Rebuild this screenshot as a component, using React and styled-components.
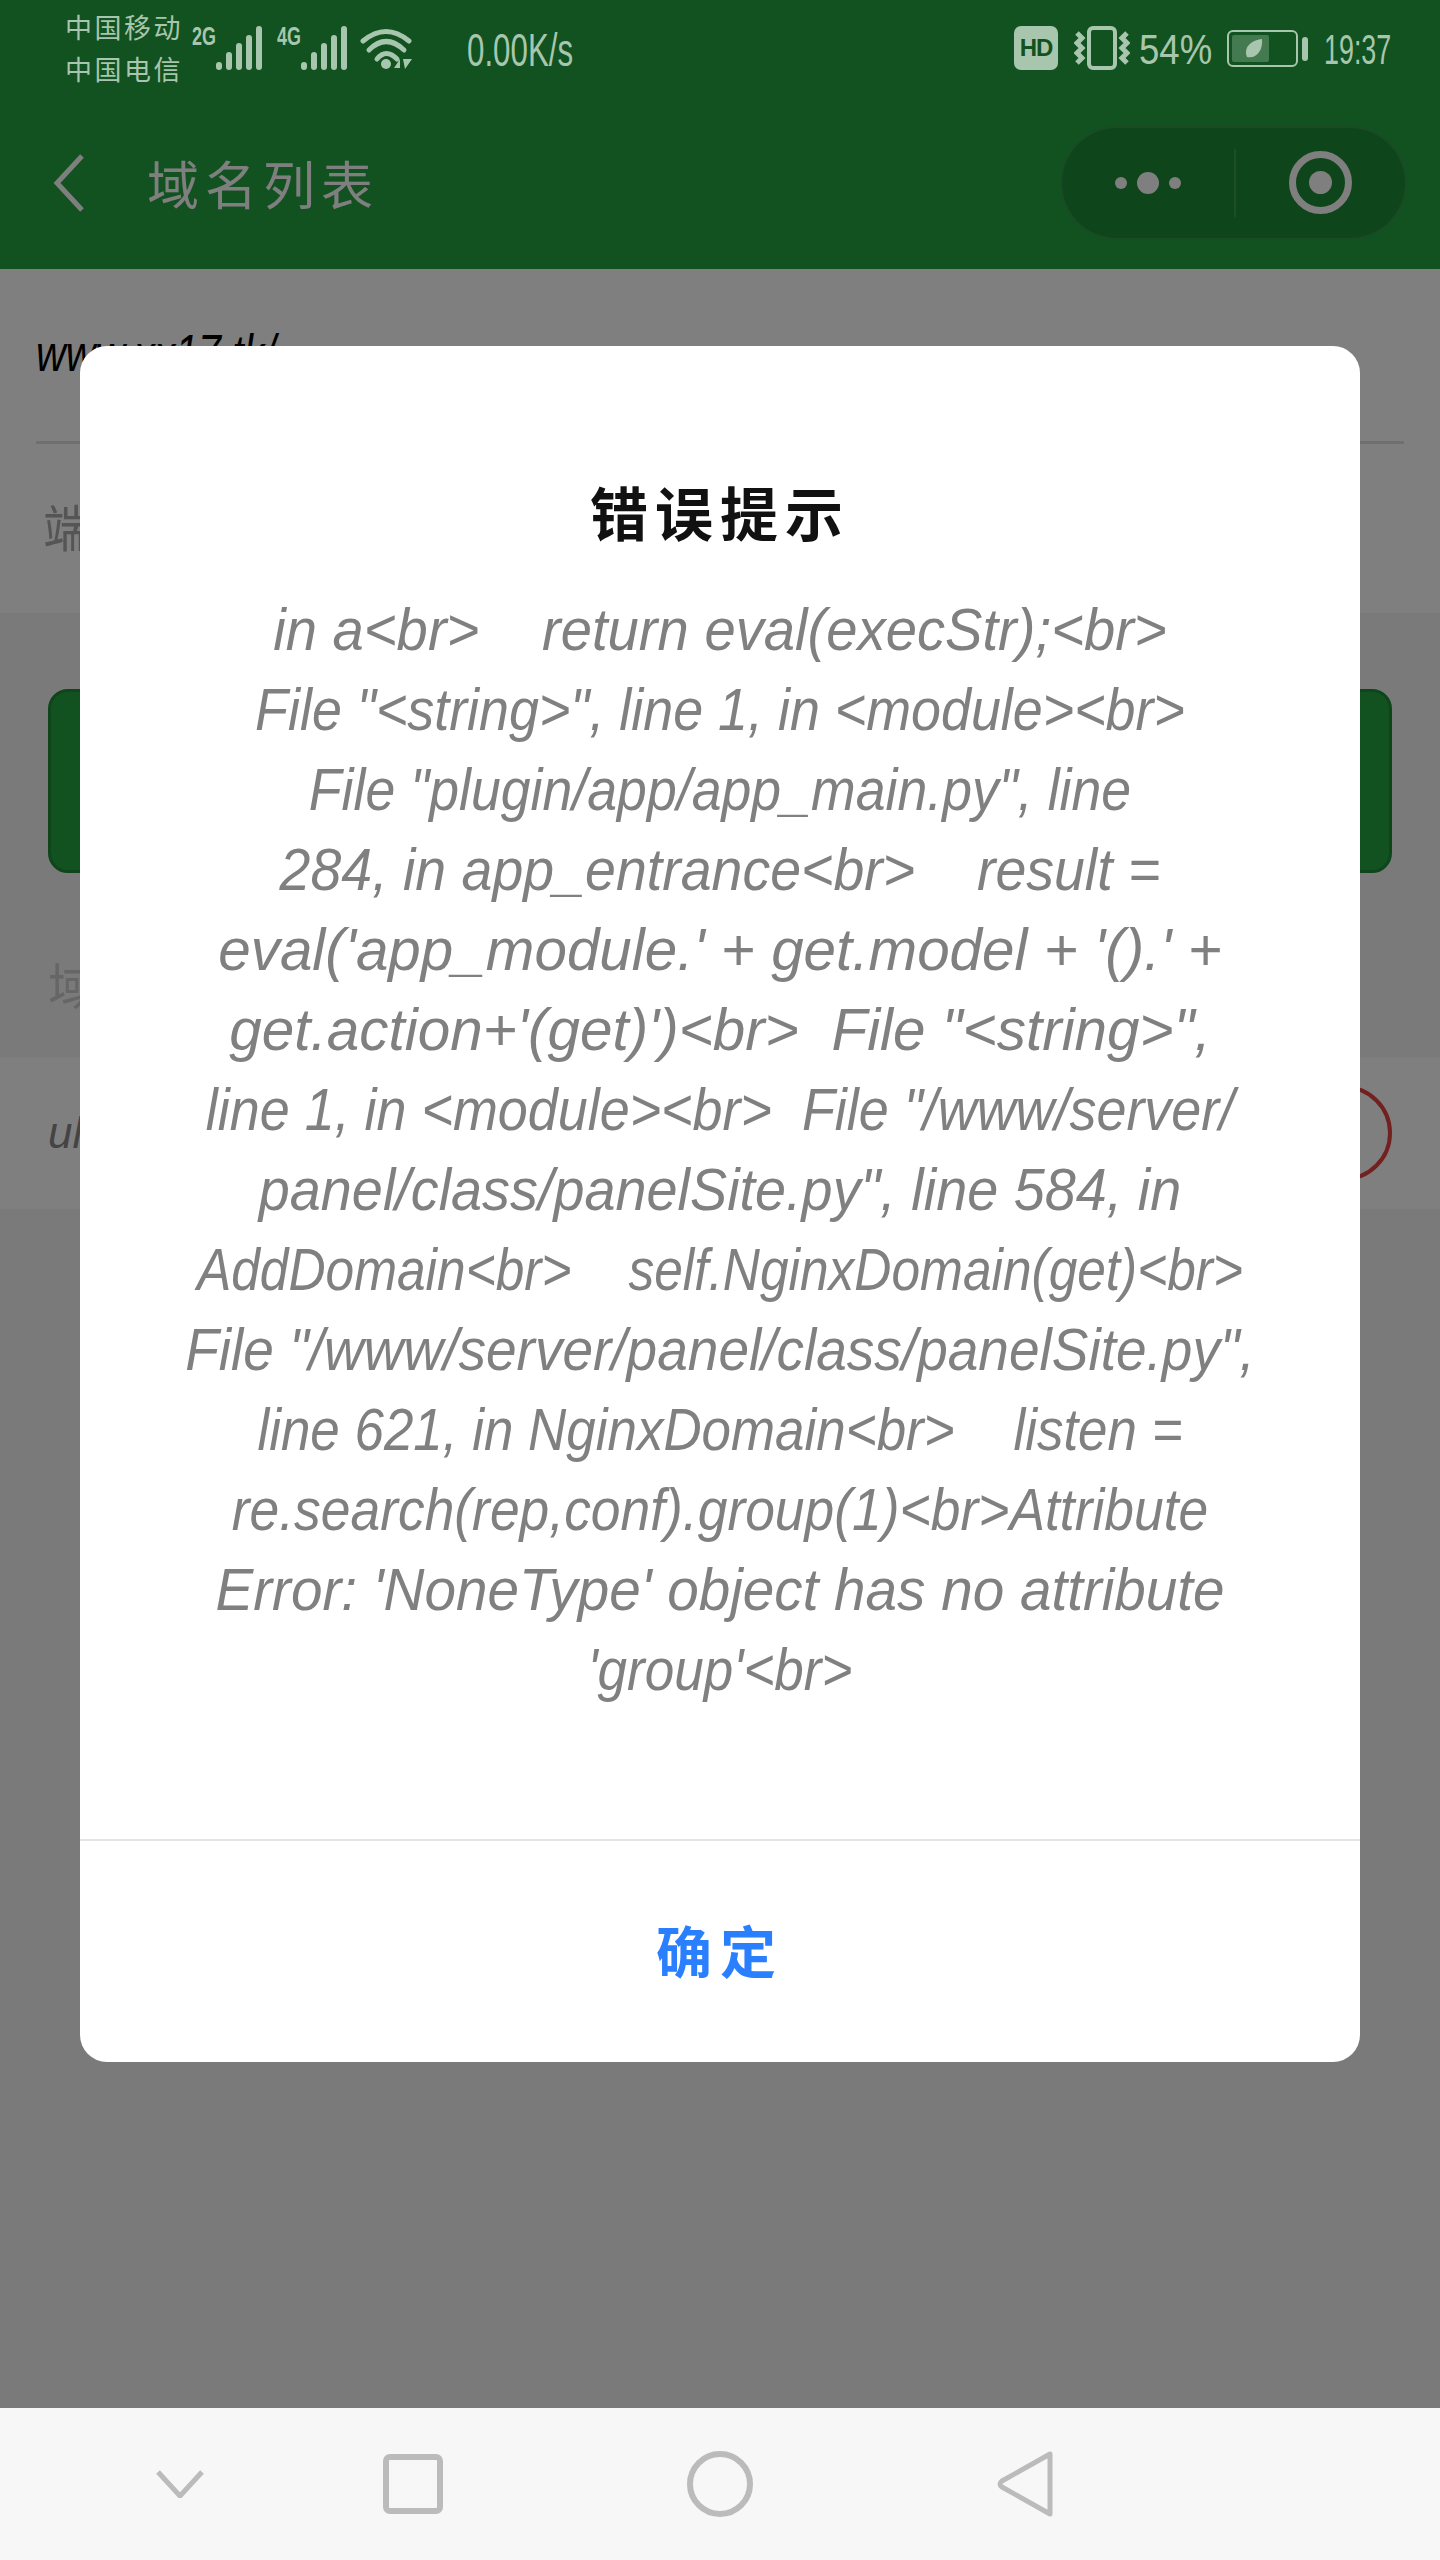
import React from 'react'
import styled, { createGlobalStyle } from 'styled-components'

const cjk = '"Noto Sans CJK SC", "Liberation Sans", sans-serif'
const sans = '"Liberation Sans", "Noto Sans CJK SC", sans-serif'

const messageLines = [
    { text: 'in a<br>\u00a0\u00a0\u00a0\u00a0return eval(execStr);<br>', fit: 0.937 },
    { text: 'File "<string>", line 1, in <module><br>', fit: 0.897 },
    { text: 'File "plugin/app/app_main.py", line', fit: 0.894 },
    { text: '284, in app_entrance<br>\u00a0\u00a0\u00a0\u00a0result =', fit: 0.925 },
    { text: "eval('app_module.' + get.model + '().' +", fit: 0.973 },
    { text: "get.action+'(get)')<br>\u00a0\u00a0File \"<string>\",", fit: 0.974 },
    { text: 'line 1, in <module><br>\u00a0\u00a0File "/www/server/', fit: 0.898 },
    { text: 'panel/class/panelSite.py", line 584, in', fit: 0.93 },
    { text: 'AddDomain<br>\u00a0\u00a0\u00a0\u00a0self.NginxDomain(get)<br>', fit: 0.857 },
    { text: 'File "/www/server/panel/class/panelSite.py",', fit: 0.917 },
    { text: 'line 621, in NginxDomain<br>\u00a0\u00a0\u00a0\u00a0listen =', fit: 0.882 },
    { text: 're.search(rep,conf).group(1)<br>Attribute', fit: 0.89 },
    { text: "Error: 'NoneType' object has no attribute", fit: 0.944 },
    { text: "'group'<br>", fit: 0.884 },
]

function Signal() {
    return (
        <SignalIcon viewBox="0 0 46 44">
            <rect x="0" y="36" width="6" height="8" rx="3" />
            <rect x="10" y="26" width="6" height="18" rx="3" />
            <rect x="20" y="17" width="6" height="27" rx="3" />
            <rect x="30" y="9" width="6" height="35" rx="3" />
            <rect x="40" y="0" width="6" height="44" rx="3" />
        </SignalIcon>
    )
}

function Wifi() {
    return (
        <WifiIcon viewBox="0 0 54 44">
            <g fill="none" stroke="#a8c6ad" strokeWidth="5" strokeLinecap="round">
                <path d="M4 15 Q27 -4 50 15" />
                <path d="M10 24 Q27 7 45 24" />
                <path d="M18 33 Q27 22 38 33" />
            </g>
            <circle cx="27" cy="38" r="5" fill="#a8c6ad" />
            <path d="M41 33 L35 42 H41 Z M44 33 H53 L46 43 Z" fill="#a8c6ad" />
        </WifiIcon>
    )
}

function Vibrate() {
    return (
        <VibrateIcon viewBox="0 0 56 44">
            <rect x="15" y="2" width="26" height="40" rx="4" fill="none" stroke="#a8c6ad" strokeWidth="4" />
            <path d="M3 7 L8 12 L3 17 L8 22 L3 27 L8 32 L3 37" fill="none" stroke="#a8c6ad" strokeWidth="5" />
            <path d="M53 7 L48 12 L53 17 L48 22 L53 27 L48 32 L53 37" fill="none" stroke="#a8c6ad" strokeWidth="5" />
        </VibrateIcon>
    )
}

function Battery() {
    return (
        <BatteryIcon viewBox="0 0 81 37">
            <rect x="1" y="1" width="69" height="35" rx="5" fill="none" stroke="#a8c6ad" strokeWidth="2" />
            <rect x="5" y="5" width="37" height="27" rx="2" fill="#437a4f" />
            <rect x="75" y="7" width="6" height="24" rx="3" fill="#a8c6ad" />
            <path d="M20 27 C16 18 24 10 35 9 C36 20 30 29 20 27 Z" fill="#a8c6ad" />
        </BatteryIcon>
    )
}

function App() {
    return (
        <Page>
            <GlobalStyle />
            <Header>
                <StatusBar>
                    <StatusGroup>
                        <Carriers>
                            <span>中国移动</span>
                            <span>中国电信</span>
                        </Carriers>
                        <NetLabel>2G</NetLabel>
                        <Signal />
                        <NetLabel $gap={15}>4G</NetLabel>
                        <Signal />
                        <Wifi />
                        <StatusText $gap={54} $width={106} $size={46} $fit={0.68}>0.00K/s</StatusText>
                    </StatusGroup>
                    <StatusGroup>
                        <HdBadge>HD</HdBadge>
                        <Vibrate />
                        <StatusText $gap={9} $width={72} $size={42} $fit={0.87}>54%</StatusText>
                        <Battery />
                        <StatusText $gap={16} $width={67} $size={42} $fit={0.64}>19:37</StatusText>
                    </StatusGroup>
                </StatusBar>
                <TitleBar>
                    <BackIcon viewBox="0 0 32 60">
                        <path d="M29 3 L4 30 L29 57" fill="none" stroke="#fff" strokeWidth="5" />
                    </BackIcon>
                    <PageTitle>域名列表</PageTitle>
                    <Capsule>
                        <MoreButton>
                            <Dot $size={12} />
                            <Dot $size={22} />
                            <Dot $size={12} />
                        </MoreButton>
                        <CloseButton>
                            <CloseRing />
                        </CloseButton>
                    </Capsule>
                </TitleBar>
            </Header>
            <Content>
                <Form>
                    <DomainInput><span>www.xx17.tk/</span></DomainInput>
                    <PortRow>端口</PortRow>
                </Form>
                <AddButton />
                <SectionLabel>域名</SectionLabel>
                <DomainRow>
                    <DomainName>ull</DomainName>
                    <DeleteButton />
                </DomainRow>
            </Content>
            <NavBar>
                <NavIcon viewBox="0 0 48 28" $width={48} $height={28} $gap={0}>
                    <path d="M2 2 L24 26 L46 2" fill="none" stroke="#bbb" strokeWidth="5" />
                </NavIcon>
                <NavIcon viewBox="0 0 60 60" $width={60} $height={60} $gap={179}>
                    <rect x="3" y="3" width="54" height="54" rx="4" fill="none" stroke="#bbb" strokeWidth="6" />
                </NavIcon>
                <NavIcon viewBox="0 0 66 66" $width={66} $height={66} $gap={244}>
                    <circle cx="33" cy="33" r="30" fill="none" stroke="#bbb" strokeWidth="6" />
                </NavIcon>
                <NavIcon viewBox="0 0 56 66" $width={56} $height={66} $gap={244}>
                    <path d="M53 3 V63 L5 36 Q1 33 5 30 Z" fill="none" stroke="#bbb" strokeWidth="5" strokeLinejoin="round" />
                </NavIcon>
            </NavBar>
            <Mask>
                <Modal>
                    <ModalTitle>错误提示</ModalTitle>
                    <ModalBody>
                        {messageLines.map((line) => (
                            <MessageLine key={line.text} $fit={line.fit}>{line.text}</MessageLine>
                        ))}
                    </ModalBody>
                    <ModalFooter>确定</ModalFooter>
                </Modal>
            </Mask>
        </Page>
    )
}

export default App

const GlobalStyle = createGlobalStyle`
    body{
        margin:0;
        font-family:"Noto Sans CJK SC", "Liberation Sans", sans-serif;
    }
`

const Page = styled.div`
    width:1440px;
    height:2560px;
    display:flex;
    flex-direction:column;
    position:relative;
    background:#f5f5f5;
    overflow:hidden;
`

const Header = styled.div`
    height:269px;
    background:#22a440;
    display:flex;
    flex-direction:column;
`

const StatusBar = styled.div`
    height:96px;
    padding:0 49px 0 65px;
    display:flex;
    align-items:center;
    justify-content:space-between;
    color:#a8c6ad;
    position:relative;
    z-index:2;
`

const StatusGroup = styled.div`
    display:flex;
    align-items:center;
`

const Carriers = styled.div`
    display:flex;
    flex-direction:column;
    font-family:${cjk};
    font-size:27px;
    line-height:42px;
    letter-spacing:2.5px;
    width:127px;
`

const NetLabel = styled.span`
    font-family:${sans};
    font-weight:700;
    font-size:26px;
    line-height:27px;
    width:24px;
    margin-left:${(p) => p.$gap || 0}px;
    align-self:flex-start;
    margin-top:17px;
    white-space:nowrap;
    transform:scaleX(0.69);
    transform-origin:left center;
`

const SignalIcon = styled.svg`
    width:46px;
    height:44px;
    fill:#a8c6ad;
`

const WifiIcon = styled.svg`
    width:54px;
    height:44px;
    margin-left:12px;
`

const StatusText = styled.span`
    font-family:${sans};
    font-size:${(p) => p.$size}px;
    width:${(p) => p.$width}px;
    margin-left:${(p) => p.$gap}px;
    margin-top:4px;
    white-space:nowrap;
    transform:scaleX(${(p) => p.$fit});
    transform-origin:left center;
`

const HdBadge = styled.span`
    width:44px;
    height:44px;
    border-radius:7px;
    background:#a8c6ad;
    color:#115220;
    font-family:${sans};
    font-weight:700;
    font-size:24px;
    letter-spacing:-1px;
    display:flex;
    align-items:center;
    justify-content:center;
`

const VibrateIcon = styled.svg`
    width:56px;
    height:44px;
    margin-left:16px;
`

const BatteryIcon = styled.svg`
    width:81px;
    height:37px;
    margin-left:16px;
`

const TitleBar = styled.div`
    flex:1;
    display:flex;
    align-items:center;
    padding:0 33px 0 53px;
`

const BackIcon = styled.svg`
    width:32px;
    height:60px;
`

const PageTitle = styled.div`
    flex:1;
    margin-left:62px;
    color:#fff;
    font-family:${cjk};
    font-size:52px;
    letter-spacing:6px;
`

const Capsule = styled.div`
    width:347px;
    height:114px;
    box-sizing:border-box;
    border-radius:57px;
    background:rgba(0,0,0,0.15);
    border:2px solid rgba(255,255,255,0.1);
    display:flex;
    align-items:center;
`

const MoreButton = styled.div`
    width:174px;
    height:68px;
    box-sizing:border-box;
    border-right:2px solid rgba(255,255,255,0.15);
    display:flex;
    align-items:center;
    justify-content:center;
    gap:10px;
`

const Dot = styled.span`
    width:${(p) => p.$size}px;
    height:${(p) => p.$size}px;
    border-radius:50%;
    background:#fff;
`

const CloseButton = styled.div`
    flex:1;
    display:flex;
    align-items:center;
    justify-content:center;
`

const CloseRing = styled.span`
    width:63px;
    height:63px;
    box-sizing:border-box;
    border-radius:50%;
    border:7px solid #fff;
    display:flex;
    align-items:center;
    justify-content:center;

    &::after{
        content:'';
        width:23px;
        height:23px;
        border-radius:50%;
        background:#fff;
    }
`

const Content = styled.div`
    flex:1;
    display:flex;
    flex-direction:column;
`

const Form = styled.div`
    height:344px;
    background:#fff;
    padding:0 36px;
    box-sizing:border-box;
    display:flex;
    flex-direction:column;
`

const DomainInput = styled.div`
    height:175px;
    box-sizing:border-box;
    border-bottom:3px solid #dedede;
    color:#000;
    font-family:${sans};
    font-style:italic;
    font-size:52px;
    line-height:168px;

    span{
        display:block;
        white-space:nowrap;
        transform:scaleX(0.79);
        transform-origin:left center;
    }
`

const PortRow = styled.div`
    flex:1;
    padding:0 0 8px 7px;
    color:#aaa;
    display:flex;
    align-items:center;
    font-family:${cjk};
    font-size:50px;
`

const AddButton = styled.div`
    height:184px;
    margin:76px 48px 0;
    box-sizing:border-box;
    border-radius:20px;
    background:#22a440;
    border:3px solid #1c8a36;
`

const SectionLabel = styled.div`
    margin:85px 0 0 48px;
    height:99px;
    color:#ccc;
    font-family:${cjk};
    font-size:50px;
    line-height:50px;
`

const DomainRow = styled.div`
    height:152px;
    padding:0 48px;
    background:#fff;
    display:flex;
    align-items:center;
    justify-content:space-between;
`

const DomainName = styled.span`
    color:#888;
    font-family:${sans};
    font-style:italic;
    font-size:44px;
`

const DeleteButton = styled.span`
    width:96px;
    height:96px;
    box-sizing:border-box;
    border-radius:50%;
    border:4px solid #e64040;
`

const NavBar = styled.div`
    height:152px;
    padding-left:156px;
    background:#f7f7f7;
    display:flex;
    align-items:center;
`

const NavIcon = styled.svg`
    width:${(p) => p.$width}px;
    height:${(p) => p.$height}px;
    margin-left:${(p) => p.$gap}px;
`

const Mask = styled.div`
    position:absolute;
    top:0;
    left:0;
    right:0;
    bottom:152px;
    z-index:1;
    background:rgba(0,0,0,0.5);
    display:flex;
    align-items:center;
    justify-content:center;
`

const Modal = styled.div`
    width:1280px;
    height:1716px;
    border-radius:27px;
    background:#fff;
    display:flex;
    flex-direction:column;
`

const ModalTitle = styled.div`
    padding-top:120px;
    height:90px;
    text-align:center;
    color:#111;
    font-family:${cjk};
    font-weight:700;
    font-size:58px;
    line-height:90px;
    letter-spacing:7px;
`

const ModalBody = styled.div`
    flex:1;
    padding-top:34px;
    text-align:center;
    color:#808080;
    font-family:${sans};
    font-style:italic;
    font-size:60px;
    line-height:80px;
`

const MessageLine = styled.div`
    white-space:pre;
    transform:scaleX(${(p) => p.$fit});
`

const ModalFooter = styled.div`
    height:223px;
    box-sizing:border-box;
    padding-bottom:6px;
    border-top:2px solid #e5e5e5;
    display:flex;
    align-items:center;
    justify-content:center;
    color:#2a7fff;
    font-family:${cjk};
    font-weight:700;
    font-size:56px;
    letter-spacing:8px;
`
